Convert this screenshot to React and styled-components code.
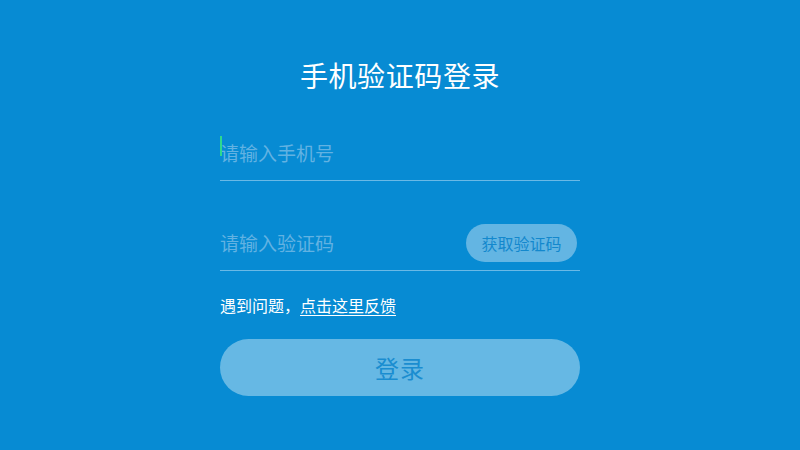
import React from 'react';
import styled, { createGlobalStyle } from 'styled-components';

const GlobalStyle = createGlobalStyle`
  html, body {
    margin: 0;
    padding: 0;
    background: #078bd3;
  }
  body {
    font-family: "Noto Sans CJK SC", "Noto Sans", sans-serif;
  }
`;

const Page = styled.div`
  width: 800px;
  height: 450px;
  background: #078bd3;
  display: flex;
  flex-direction: column;
  align-items: center;
  box-sizing: border-box;
  padding-top: 55px;
`;

const Title = styled.h1`
  margin: 0;
  font-size: 28px;
  font-weight: 400;
  color: #ffffff;
  line-height: 40px;
  letter-spacing: 0.6px;
`;

const Form = styled.div`
  width: 360px;
  display: flex;
  flex-direction: column;
  margin-top: 29px;
`;

const Field = styled.div`
  height: ${p => p.$height}px;
  margin-top: ${p => p.$gap}px;
  display: flex;
  align-items: center;
  border-bottom: 1px solid rgba(140, 200, 236, 0.75);
  position: relative;
`;

const Input = styled.input`
  flex: 1;
  min-width: 0;
  height: 100%;
  border: none;
  outline: none;
  background: transparent;
  padding: ${p => p.$shift || 0}px 0 0;
  box-sizing: border-box;
  font-family: inherit;
  font-size: 19px;
  color: #ffffff;
  caret-color: #2ee08a;

  &::placeholder {
    color: #62b2e2;
  }
`;

const Caret = styled.span`
  position: absolute;
  left: 0;
  top: 12px;
  width: 2px;
  height: 20px;
  background: #2ed88e;
`;

const CodeButton = styled.button`
  flex: none;
  height: 38px;
  width: 111px;
  border: none;
  border-radius: 19px;
  background: #63b5e3;
  color: #1388cd;
  font-family: inherit;
  font-size: 16px;
  padding: 0;
  margin: 5px 3px 0 0;
  cursor: pointer;
`;

const Help = styled.p`
  margin: 23px 0 0;
  font-size: 16px;
  line-height: 22px;
  color: #ffffff;
`;

const HelpLink = styled.a`
  color: #ffffff;
  text-decoration: underline;
  text-underline-offset: 3px;
  cursor: pointer;
`;

const SubmitButton = styled.button`
  margin-top: 23px;
  height: 57px;
  border: none;
  border-radius: 29px;
  background: #66b8e4;
  color: #1a8dd0;
  font-family: inherit;
  font-size: 24px;
  letter-spacing: 1px;
  cursor: pointer;
`;

export default function App() {
  return (
    <>
      <GlobalStyle />
      <Page>
        <Title>手机验证码登录</Title>
        <Form>
          <Field $height={56} $gap={0}>
            <Caret />
            <Input placeholder="请输入手机号" />
          </Field>
          <Field $height={59} $gap={30}>
            <Input $shift={4} placeholder="请输入验证码" />
            <CodeButton>获取验证码</CodeButton>
          </Field>
          <Help>
            遇到问题，<HelpLink>点击这里反馈</HelpLink>
          </Help>
          <SubmitButton>登录</SubmitButton>
        </Form>
      </Page>
    </>
  );
}
